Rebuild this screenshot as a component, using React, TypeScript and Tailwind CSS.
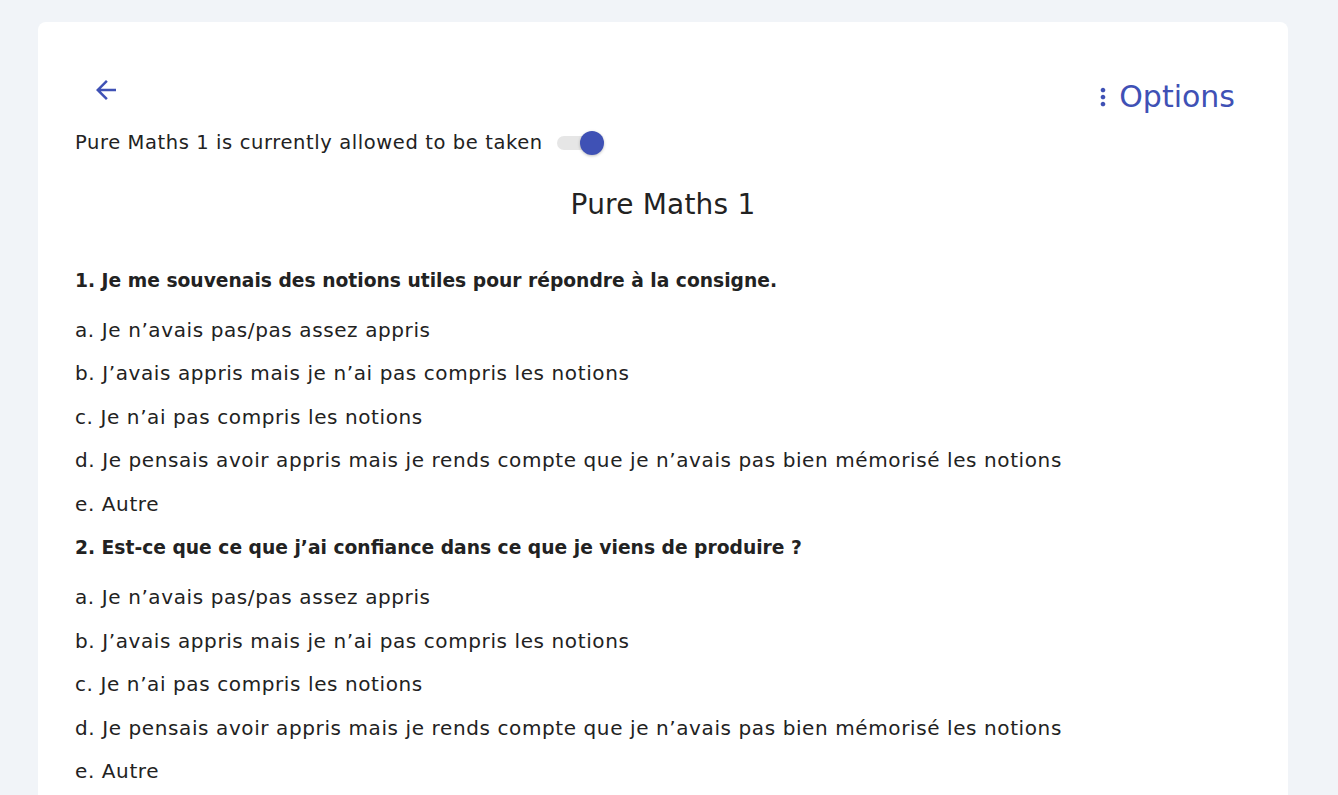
import { useState } from "react";

const BLUE = "#3f51b5";

const CHOICES = [
  "a. Je n\u2019avais pas/pas assez appris",
  "b. J\u2019avais appris mais je n\u2019ai pas compris les notions",
  "c. Je n\u2019ai pas compris les notions",
  "d. Je pensais avoir appris mais je rends compte que je n\u2019avais pas bien m\u00e9moris\u00e9 les notions",
  "e. Autre",
];

const QUESTIONS = [
  {
    title: "1. Je me souvenais des notions utiles pour r\u00e9pondre \u00e0 la consigne.",
    choices: CHOICES,
  },
  {
    title: "2. Est-ce que ce que j\u2019ai confiance dans ce que je viens de produire ?",
    choices: CHOICES,
  },
];

function ArrowBack() {
  return (
    <svg width="30" height="30" viewBox="0 0 24 24" fill={BLUE}>
      <path d="M20 11H7.83l5.59-5.59L12 4l-8 8 8 8 1.41-1.41L7.83 13H20v-2z" />
    </svg>
  );
}

function MoreVert() {
  return (
    <svg width="28" height="28" viewBox="0 0 24 24" fill={BLUE}>
      <path d="M12 8c1.1 0 2-.9 2-2s-.9-2-2-2-2 .9-2 2 .9 2 2 2zm0 2c-1.1 0-2 .9-2 2s.9 2 2 2 2-.9 2-2-.9-2-2-2zm0 6c-1.1 0-2 .9-2 2s.9 2 2 2 2-.9 2-2-.9-2-2-2z" />
    </svg>
  );
}

function Toggle({ on, onChange }: { on: boolean; onChange: () => void }) {
  return (
    <button
      type="button"
      onClick={onChange}
      className="relative ml-[13px] h-[24px] w-[48px] shrink-0"
      aria-pressed={on}
    >
      <span className="absolute left-[1px] top-[5px] h-[14px] w-[44px] rounded-full bg-[#e6e6e6]" />
      <span
        className={
          on
            ? "absolute left-[24px] top-0 h-[24px] w-[24px] rounded-full bg-[#3f51b5] shadow-[0_1px_3px_rgba(0,0,0,0.25)]"
            : "absolute left-0 top-0 h-[24px] w-[24px] rounded-full bg-[#fafafa] shadow-[0_1px_3px_rgba(0,0,0,0.25)]"
        }
      />
    </button>
  );
}

export default function App() {
  const [allowed, setAllowed] = useState(true);

  return (
    <div
      className="min-h-[795px] bg-[#f1f4f8] pl-[38px] pt-[22px] text-[#222222]"
      style={{ fontFamily: '"DejaVu Sans", sans-serif' }}
    >
      <div className="w-[1250px] rounded-t-[8px] bg-white px-[37px] pb-[40px] pt-[53px]">
        <div className="flex items-start justify-between">
          <button type="button" className="ml-[16px] flex h-[30px] w-[30px] items-center justify-center">
            <ArrowBack />
          </button>
          <button type="button" className="mr-[16px] mt-[2px] flex items-center text-[30px] leading-[40px] text-[#3f51b5]">
            <MoreVert />
            <span className="ml-[2px]">Options</span>
          </button>
        </div>

        <div className="mt-[14px] flex h-[24px] items-center text-[19.5px] tracking-[0.6px]">
          <span>Pure Maths 1 is currently allowed to be taken</span>
          <Toggle on={allowed} onChange={() => setAllowed((v) => !v)} />
        </div>

        <h1 className="mt-[33px] text-center text-[28px] leading-[34px] tracking-[0.2px]">Pure Maths 1</h1>

        <div className="mt-[36.5px]">
          {QUESTIONS.map((q, i) => (
            <div key={i}>
              <h2 className="mb-[7px] text-[18.7px] font-semibold leading-[43px]">{q.title}</h2>
              {q.choices.map((c) => (
                <p key={c} className="text-[20px] leading-[43.5px] tracking-[0.6px]">
                  {c}
                </p>
              ))}
            </div>
          ))}
        </div>
      </div>
    </div>
  );
}
